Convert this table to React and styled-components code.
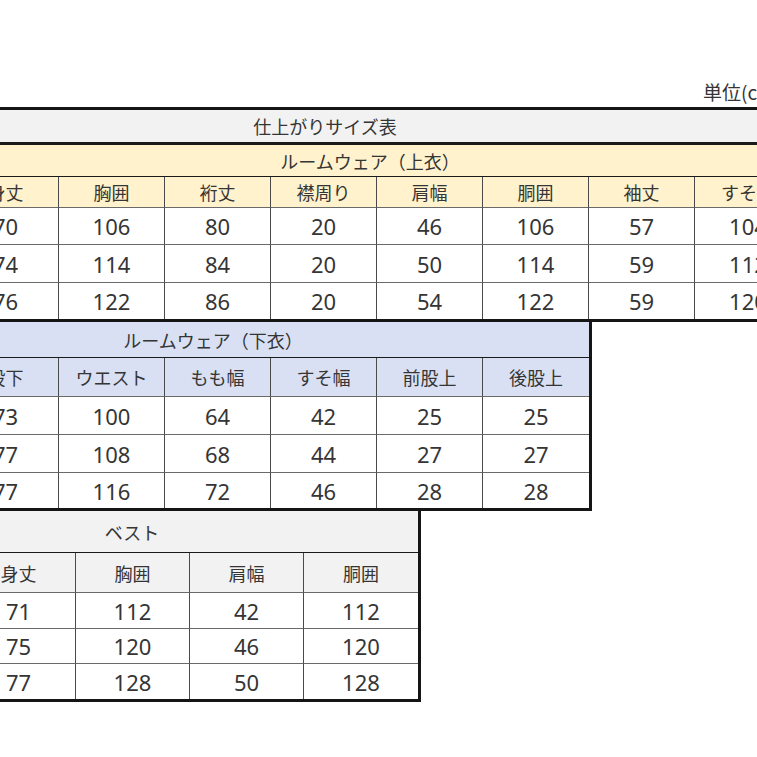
import React from "react";
import styled, { createGlobalStyle } from "styled-components";

const GlobalStyle = createGlobalStyle`
  html, body {
    margin: 0;
    padding: 0;
    background: #fff;
  }
  body {
    font-family: "Noto Sans CJK JP", "Noto Sans", sans-serif;
    color: #353535;
  }
`;

const Page = styled.div`
  width: 757px;
  height: 757px;
  overflow: hidden;
  padding-top: 77px;
  box-sizing: border-box;
  background: #fff;
`;

const Unit = styled.div`
  height: 30px;
  padding-left: 703px;
  font-size: 19px;
  line-height: 30px;
  white-space: nowrap;
`;

const Sheet = styled.div`
  display: grid;
  grid-template-columns: repeat(${(p) => p.$cols}, ${(p) => p.$colWidth}px);
  width: max-content;
  margin-left: ${(p) => p.$offset}px;
  border: 3px solid #151515;
  border-top-width: ${(p) => (p.$first ? 3 : 0)}px;
`;

const Title = styled.div`
  grid-column: 1 / -1;
  box-sizing: border-box;
  height: ${(p) => p.$h}px;
  padding-right: ${(p) => p.$shift}px;
  background: ${(p) => p.$bg};
  border-bottom: ${(p) => p.$line}px solid #1a1a1a;
  display: flex;
  align-items: center;
  justify-content: center;
  font-size: 18px;
  white-space: nowrap;
`;

const Cell = styled.div`
  box-sizing: border-box;
  height: ${(p) => p.$h}px;
  background: ${(p) => p.$bg || "#fff"};
  border-right: ${(p) => (p.$edge ? "none" : "1px solid #4a4a4a")};
  border-bottom: ${(p) => (p.$last ? "none" : "1px solid #6a6a6a")};
  display: flex;
  align-items: center;
  justify-content: center;
  white-space: nowrap;
`;

const HeadCell = styled(Cell)`
  font-size: 18px;
`;

const NumCell = styled(Cell)`
  font-family: "Noto Sans", "Liberation Sans", sans-serif;
  font-size: 22px;
`;

const tables = [
  {
    key: "top",
    first: true,
    offset: -50,
    colWidth: 106,
    bg: "#fff2cc",
    titles: [
      { text: "仕上がりサイズ表", h: 35, line: 3, shift: 104, bg: "#f2f2f2" },
      { text: "ルームウェア（上衣）", h: 32, line: 1, shift: 14 },
    ],
    headH: 31,
    rowH: [37, 38, 36],
    heads: ["身丈", "胸囲", "裄丈", "襟周り", "肩幅", "胴囲", "袖丈", "すそ幅"],
    rows: [
      [70, 106, 80, 20, 46, 106, 57, 104],
      [74, 114, 84, 20, 50, 114, 59, 112],
      [76, 122, 86, 20, 54, 122, 59, 120],
    ],
  },
  {
    key: "bottoms",
    offset: -50,
    colWidth: 106,
    bg: "#d9e0f3",
    titles: [{ text: "ルームウェア（下衣）", h: 36, line: 1, shift: 116 }],
    headH: 39,
    rowH: [38, 38, 35],
    heads: ["股下", "ウエスト", "もも幅", "すそ幅", "前股上", "後股上"],
    rows: [
      [73, 100, 64, 42, 25, 25],
      [77, 108, 68, 44, 27, 27],
      [77, 116, 72, 46, 28, 28],
    ],
  },
  {
    key: "vest",
    offset: -41,
    colWidth: 114,
    bg: "#f2f2f2",
    titles: [{ text: "ベスト", h: 42, line: 1, shift: 116 }],
    headH: 40,
    rowH: [36, 35, 35],
    heads: ["身丈", "胸囲", "肩幅", "胴囲"],
    rows: [
      [71, 112, 42, 112],
      [75, 120, 46, 120],
      [77, 128, 50, 128],
    ],
  },
];

function SizeSheet({ table }) {
  const cols = table.heads.length;
  return (
    <Sheet
      $cols={cols}
      $colWidth={table.colWidth}
      $offset={table.offset}
      $first={table.first}
    >
      {table.titles.map((t) => (
        <Title key={t.text} $h={t.h} $line={t.line} $shift={t.shift} $bg={t.bg || table.bg}>
          {t.text}
        </Title>
      ))}
      {table.heads.map((h, i) => (
        <HeadCell key={h + i} $h={table.headH} $bg={table.bg} $edge={i === cols - 1}>
          {h}
        </HeadCell>
      ))}
      {table.rows.map((row, r) =>
        row.map((v, i) => (
          <NumCell
            key={r + "-" + i}
            $h={table.rowH[r]}
            $edge={i === cols - 1}
            $last={r === table.rows.length - 1}
          >
            {v}
          </NumCell>
        ))
      )}
    </Sheet>
  );
}

export default function App() {
  return (
    <>
      <GlobalStyle />
      <Page>
        <Unit>単位(cm)</Unit>
        {tables.map((t) => (
          <SizeSheet key={t.key} table={t} />
        ))}
      </Page>
    </>
  );
}
